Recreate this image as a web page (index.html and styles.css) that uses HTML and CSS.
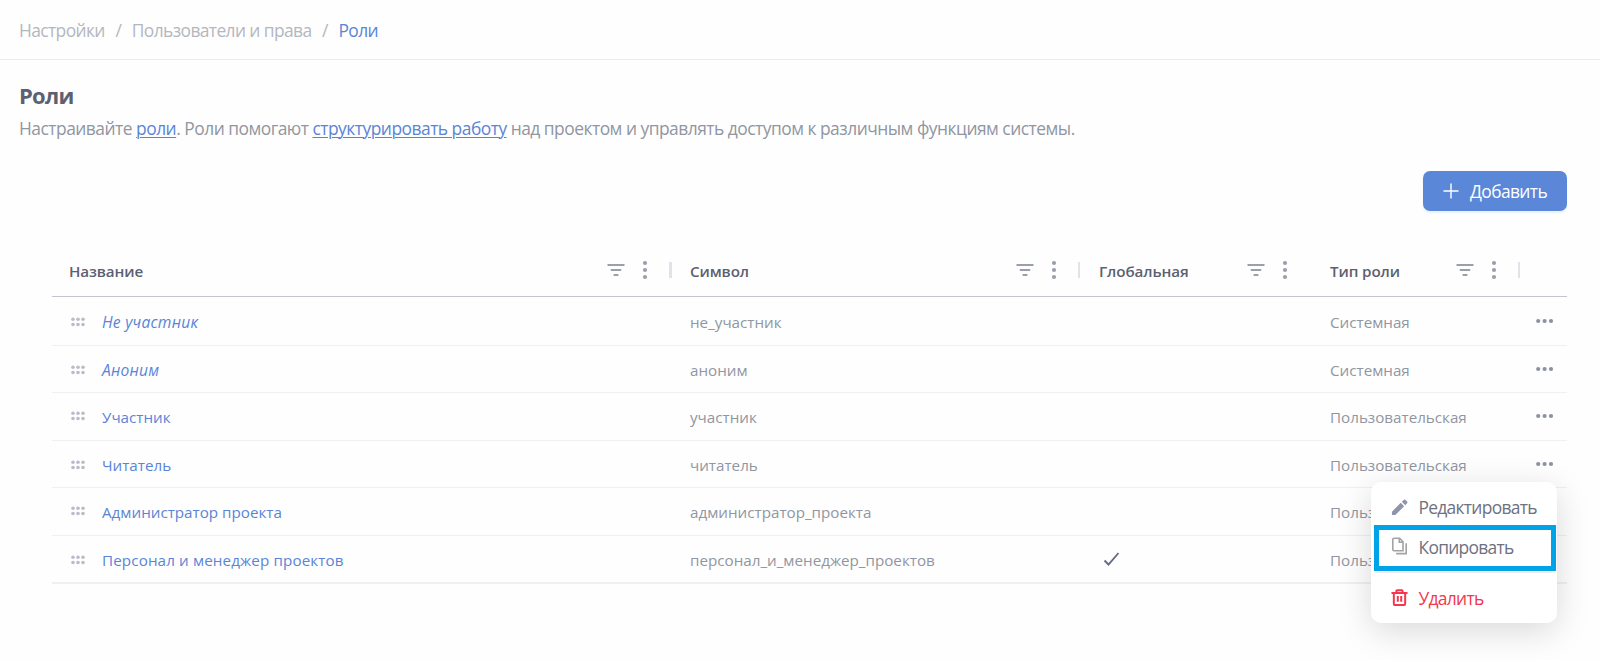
FILE: index.html
```html
<!DOCTYPE html>
<html lang="ru">
<head>
<meta charset="utf-8">
<title>Роли</title>
<link rel="stylesheet" href="styles.css">
</head>
<body>
<svg class="sprite" aria-hidden="true">
  <symbol id="filter" viewBox="0 0 18 14"><path d="M.5 2h17M3.800 7h10.400M6.600 12h4.800" fill="none" stroke="currentColor" stroke-width="1.800"/></symbol>
  <symbol id="kebab" viewBox="0 0 6 20"><circle cx="3" cy="3" r="2.1"/><circle cx="3" cy="10" r="2.1"/><circle cx="3" cy="17" r="2.1"/></symbol>
  <symbol id="grip" viewBox="0 0 14 10"><circle cx="2" cy="2.3" r="1.8"/><circle cx="7" cy="2.3" r="1.8"/><circle cx="12" cy="2.3" r="1.8"/><circle cx="2" cy="7.5" r="1.8"/><circle cx="7" cy="7.5" r="1.8"/><circle cx="12" cy="7.5" r="1.8"/></symbol>
  <symbol id="more" viewBox="0 0 18 6"><circle cx="2.2" cy="3" r="2.1"/><circle cx="8.6" cy="3" r="2.1"/><circle cx="15" cy="3" r="2.1"/></symbol>
</svg>

<nav class="crumbs">
  <a class="crumb">Настройки</a><span class="slash">/</span><a class="crumb">Пользователи и права</a><span class="slash">/</span><a class="crumb current">Роли</a>
</nav>

<main class="page">
  <h1 class="title">Роли</h1>
  <p class="lead">Настраивайте <a class="link">роли</a>. Роли помогают <a class="link">структурировать работу</a> над проектом и управлять доступом к различным функциям системы.</p>
  <div class="toolbar">
    <button class="add">
      <svg class="plus" viewBox="0 0 16 16"><path d="M8 .5v15M.5 8h15" fill="none" stroke="currentColor" stroke-width="1.400"/></svg>
      <span>Добавить</span>
    </button>
  </div>

  <section class="table">
    <div class="row head">
      <div class="cell"><span class="label">Название</span><svg class="filter"><use href="#filter"/></svg><svg class="kebab"><use href="#kebab"/></svg><i class="sep thick"></i></div>
      <div class="cell"><span class="label">Символ</span><svg class="filter"><use href="#filter"/></svg><svg class="kebab"><use href="#kebab"/></svg><i class="sep"></i></div>
      <div class="cell"><span class="label">Глобальная</span><svg class="filter"><use href="#filter"/></svg><svg class="kebab"><use href="#kebab"/></svg><i class="sep hidden"></i></div>
      <div class="cell"><span class="label">Тип роли</span><svg class="filter"><use href="#filter"/></svg><svg class="kebab"><use href="#kebab"/></svg><i class="sep"></i></div>
      <div></div>
    </div>
    <div class="row first">
      <div class="cell"><svg class="grip"><use href="#grip"/></svg><a class="name builtin">Не участник</a></div>
      <div class="cell">не_участник</div><div class="cell"></div><div class="cell">Системная</div>
      <div class="actions"><svg class="more"><use href="#more"/></svg></div>
    </div>
    <div class="row short">
      <div class="cell"><svg class="grip"><use href="#grip"/></svg><a class="name builtin">Аноним</a></div>
      <div class="cell">аноним</div><div class="cell"></div><div class="cell">Системная</div>
      <div class="actions"><svg class="more"><use href="#more"/></svg></div>
    </div>
    <div class="row raised">
      <div class="cell"><svg class="grip"><use href="#grip"/></svg><a class="name">Участник</a></div>
      <div class="cell">участник</div><div class="cell"></div><div class="cell">Пользовательская</div>
      <div class="actions"><svg class="more"><use href="#more"/></svg></div>
    </div>
    <div class="row short">
      <div class="cell"><svg class="grip"><use href="#grip"/></svg><a class="name">Читатель</a></div>
      <div class="cell">читатель</div><div class="cell"></div><div class="cell">Пользовательская</div>
      <div class="actions">
        <svg class="more"><use href="#more"/></svg>
        <div class="menu">
          <a class="item"><svg class="icon" viewBox="0 0 18 18"><path d="M1 17v-3.600L10.300 4.100l3.600 3.600L4.600 17zM11.500 2.900l1.700-1.700a1.700 1.700 0 0 1 2.400 0l1.200 1.200a1.700 1.700 0 0 1 0 2.400l-1.700 1.700z" fill="#8f94ab"/></svg>Редактировать</a>
          <a class="item picked"><svg class="icon copy" viewBox="0 0 17 18"><path d="M3 1.200h5.700l3.300 3.500v9H3A1.200 1.200 0 0 1 1.800 12.500V2.400A1.200 1.200 0 0 1 3 1.200zM8.300 1.200v4H12M5.200 16.600h10V6.200" fill="none" stroke="#a3a3a3" stroke-width="1.600"/></svg>Копировать</a>
          <hr class="rule">
          <a class="item danger"><svg class="icon" viewBox="0 0 18 18"><path d="M.5 4.300h17M5.700 4V2.400q0-1 1-1h4.600q1 0 1 1V4M3 4.500v11q0 1.500 1.500 1.500h9q1.500 0 1.500-1.500v-11M7.200 7.300v6.300M10.800 7.300v6.300" fill="none" stroke="#f5364c" stroke-width="2.100"/></svg>Удалить</a>
        </div>
      </div>
    </div>
    <div class="row raised">
      <div class="cell"><svg class="grip"><use href="#grip"/></svg><a class="name">Администратор проекта</a></div>
      <div class="cell">администратор_проекта</div><div class="cell"></div><div class="cell">Пользовательская</div>
      <div></div>
    </div>
    <div class="row last">
      <div class="cell"><svg class="grip"><use href="#grip"/></svg><a class="name long">Персонал и менеджер проектов</a></div>
      <div class="cell">персонал_и_менеджер_проектов</div>
      <div class="cell"><svg class="check" viewBox="0 0 17 16"><path d="M1.500 9.500l4 4L15.500 2" fill="none" stroke="#666c85" stroke-width="1.900"/></svg></div>
      <div class="cell">Пользовательская</div>
      <div></div>
    </div>
  </section>
</main>
</body>
</html>
```
FILE: styles.css
```css
* { box-sizing: border-box; }

body {
  margin: 0;
  width: 1600px;
  height: 660px;
  overflow: hidden;
  background: #fefefe;
  color: #9096a2;
  font-family: "Open Sans", "Noto Sans", sans-serif;
  font-size: 17.4px;
}

.sprite { display: none; }
svg { fill: currentColor; flex: none; }

.crumbs {
  display: flex;
  align-items: center;
  height: 60px;
  padding-left: 19px;
  border-bottom: 1px solid #ebebed;
  color: #b4b7be;
  letter-spacing: -0.6px;
}
.slash { width: 27px; text-align: center; }
.current { color: #5a85d6; }

.page { padding: 0 33px 0 19px; }

.title {
  margin: 20px 0 0;
  font-size: 22px;
  line-height: 30px;
  color: #5c6070;
  letter-spacing: -0.7px;
}
.lead {
  margin: 6px 0 0;
  line-height: 24px;
  letter-spacing: -0.5px;
  white-space: nowrap;
}
.link {
  color: #5a85d6;
  text-decoration: underline;
  text-decoration-thickness: 1px;
  text-underline-offset: 2px;
}

.toolbar { display: flex; justify-content: flex-end; margin-top: 31px; }
.add {
  display: flex;
  align-items: center;
  gap: 11px;
  width: 144px;
  height: 40px;
  padding: 0 0 0 20px;
  border: 0;
  border-radius: 7px;
  background: #5a87d7;
  box-shadow: 0 2px 2px #e9f2fd;
  color: #fff;
  font: inherit;
  letter-spacing: -0.6px;
}
.plus { width: 16px; height: 16px; }

.table {
  width: 1515px;
  margin: 34px 0 0 33px;
  font-size: 15.2px;
}
.row {
  display: grid;
  grid-template-columns: 619.500px 408.500px 231px 208.500px 47.500px;
  height: 48px;
  border-bottom: 1px solid #f0f0f2;
}
.row.first { height: 49px; }
.row.short { height: 47px; }
.row.last { border-bottom: 2px solid #f0f0f2; }
.cell { display: flex; align-items: center; padding: 2px 0 0 19px; }
.cell:first-child { padding-left: 17px; }
.cell:nth-child(2) { padding-left: 18.500px; }
.raised .cell { padding-top: 0; }
.raised .actions { padding-bottom: 1px; }

.head { height: 52px; border-bottom: 1px solid #c5c5cf; }
.head .cell { padding-top: 0; padding-bottom: 2px; color: #9b9fab; }
.label { flex: 1; color: #5c6070; font-weight: 600; padding-top: 2px; letter-spacing: -0.1px; }
.filter { width: 18px; height: 14px; }
.kebab { width: 6px; height: 20px; margin-left: 17px; }
.sep { width: 2px; height: 16px; margin-left: 21px; background: #e2e2ea; }
.sep.thick { width: 3px; margin-left: 20.500px; }
.sep.hidden { visibility: hidden; }

.grip { width: 14px; height: 10px; margin: -1px 17px 0 2px; color: #b9bdc9; }
.name { color: #5a85d6; }
.name.long { letter-spacing: 0.12px; }
.builtin { font-style: italic; font-size: 15.6px; letter-spacing: 0.24px; }
.check { width: 17px; height: 16px; margin: -3px 0 0 4px; }

.actions { position: relative; display: flex; align-items: center; padding-left: 16px; }
.more { width: 18px; height: 6px; color: #8c91a3; }

.menu {
  position: absolute;
  top: 41px;
  right: 10px;
  width: 186px;
  height: 141px;
  padding: 6px 3px 5px;
  border-radius: 10px;
  background: #fff;
  box-shadow: 0 8px 34px rgba(0, 0, 0, .15);
  color: #6d7180;
  font-size: 17.4px;
  letter-spacing: -0.7px;
}
.item { display: flex; align-items: center; height: 37px; gap: 11px; padding-left: 16.500px; padding-top: 1px; }
.item.picked { width: 182px; height: 46px; padding: 0 0 2px 11.500px; border: 5px solid #00a2e8; }
.icon { width: 17px; height: 17px; }
.icon.copy { height: 18px; margin-top: -2px; }
.rule { height: 1px; margin: 1px 2px 6px; border: 0; background: #eeeef0; }
.danger { color: #f5364c; }
.danger .icon { margin-top: -2px; }
```
